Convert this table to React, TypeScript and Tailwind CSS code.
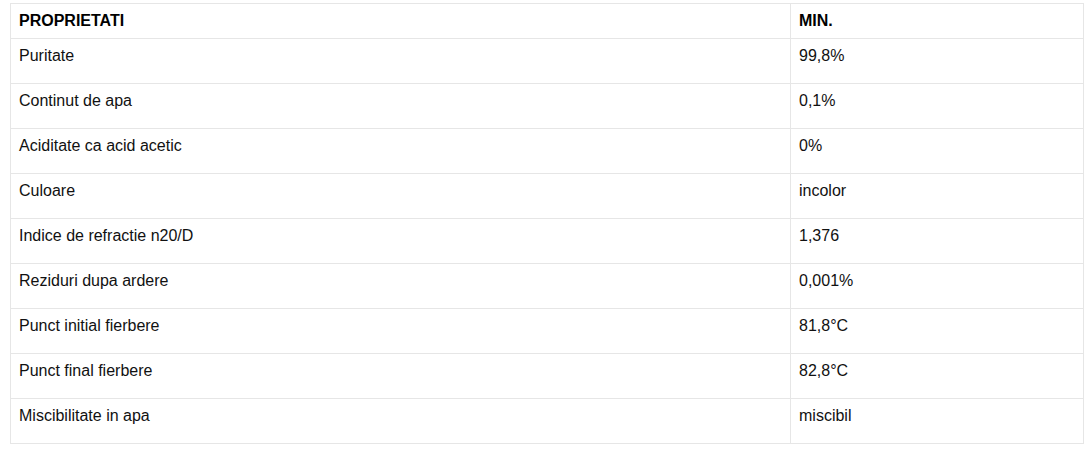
const rows: [string, string][] = [
  ["Puritate", "99,8%"],
  ["Continut de apa", "0,1%"],
  ["Aciditate ca acid acetic", "0%"],
  ["Culoare", "incolor"],
  ["Indice de refractie n20/D", "1,376"],
  ["Reziduri dupa ardere", "0,001%"],
  ["Punct initial fierbere", "81,8°C"],
  ["Punct final fierbere", "82,8°C"],
  ["Miscibilitate in apa", "miscibil"],
];

export default function App() {
  return (
    <div className="bg-white pt-[3px] pl-[10px] w-[1089px] h-[455px]" style={{ fontFamily: '"Liberation Sans", Arial, sans-serif' }}>
      <table className="border-collapse w-[1074px] text-[16px] leading-[18px] text-[#111]">
        <thead>
          <tr className="h-[35px]">
            <th className="border border-[#e6e6e6] px-[8px] text-left align-top pt-[8px] font-bold text-black w-[780px]">PROPRIETATI</th>
            <th className="border border-[#e6e6e6] px-[8px] text-left align-top pt-[8px] font-bold text-black">MIN.</th>
          </tr>
        </thead>
        <tbody>
          {rows.map(([a, b]) => (
            <tr key={a} className="h-[45px]">
              <td className="border border-[#e6e6e6] px-[8px] align-top pt-[8px]">{a}</td>
              <td className="border border-[#e6e6e6] px-[8px] align-top pt-[8px]">{b}</td>
            </tr>
          ))}
        </tbody>
      </table>
    </div>
  );
}
